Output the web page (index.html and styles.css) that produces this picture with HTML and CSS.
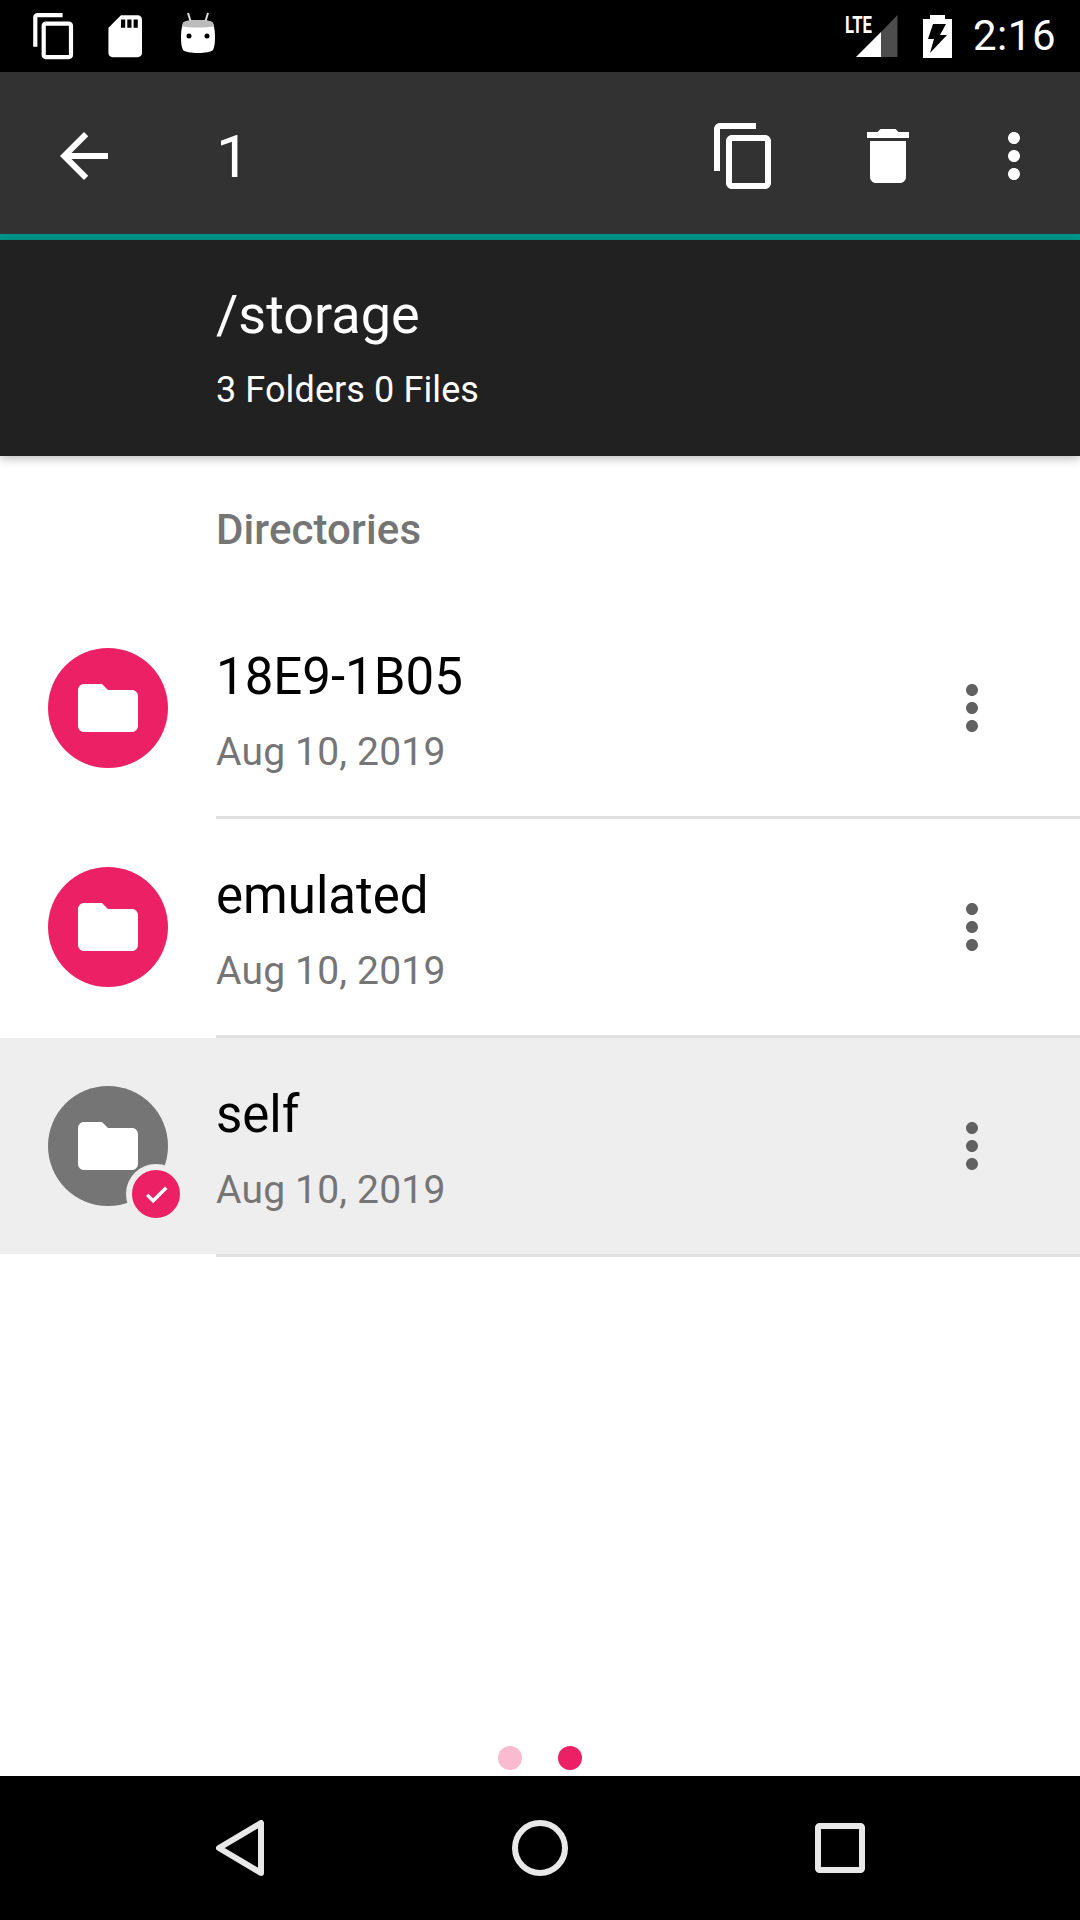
FILE: index.html
```html
<!DOCTYPE html>
<html lang="en">

<head>
    <meta charset="UTF-8">
    <title>Files</title>
    <link rel="stylesheet" href="styles.css">
</head>

<body>
    <div class="app">
        <div class="statusbar">
            <div class="status-left">
                <svg class="status-ic" viewBox="0 0 24 24">
                    <path d="M16 1H4c-1.100 0-2 .9-2 2v14h2V3h12V1zm3 4H8c-1.100 0-2 .9-2 2v14c0 1.100.9 2 2 2h11c1.100 0 2-.9 2-2V7c0-1.100-.9-2-2-2zm0 16H8V7h11v14z" />
                </svg>
                <svg class="status-ic" viewBox="0 0 24 24">
                    <path d="M18 2h-8L4.020 8 4 20c0 1.100.9 2 2 2h12c1.100 0 2-.9 2-2V4c0-1.100-.9-2-2-2zm-6 6h-2V4h2v4zm3 0h-2V4h2v4zm3 0h-2V4h2v4z" />
                </svg>
                <svg class="status-bot" viewBox="0 0 40 48">
                    <path d="M10 3l2.500 8M30 3l-2.500 8" stroke="#ddd" stroke-width="2" fill="none" />
                    <path d="M20 10C28 10 34 11 35 13C36.500 18 37 22 37 27C37 33 36.500 37 35 40C33 42 27 43 20 43C13 43 7 42 5 40C3.500 37 3 33 3 27C3 22 3.500 18 5 13C6 11 12 10 20 10z" fill="#fff" />
                    <path d="M5 13C6 11 12 10 20 10s14 1 15 3c.5 1.500.8 2.500 1 3.500C32 17 27 17.500 20 17.500S8 17 4 16.500c.2-1 .5-2 1-3.500z" fill="#bbb" />
                    <circle cx="11" cy="26" r="2.500" fill="#000" />
                    <circle cx="29" cy="26" r="2.500" fill="#000" />
                </svg>
            </div>
            <div class="status-right">
                <svg class="signal" viewBox="0 0 54 43">
                    <text x="0" y="18" class="lte" textLength="27" lengthAdjust="spacingAndGlyphs">LTE</text>
                    <path d="M11 42L36 17v25z" fill="#fff" />
                    <path d="M36 17L52.500 0v42H36z" fill="#4d4d4d" />
                </svg>
                <svg class="battery" viewBox="0 0 29 43">
                    <path d="M7 0h15v4h7v39H0V4h7z" fill="#fff" />
                    <path d="M10 9h13l-6 11h7L7 38l4-14H5z" fill="#000" />
                </svg>
                <span class="clock">2:16</span>
            </div>
        </div>

        <div class="toolbar">
            <button class="tool back">
                <svg viewBox="0 0 24 24">
                    <path d="M20 11H7.830l5.590-5.590L12 4l-8 8 8 8 1.410-1.410L7.830 13H20v-2z" />
                </svg>
            </button>
            <div class="count">1</div>
            <button class="tool">
                <svg viewBox="0 0 24 24">
                    <path d="M16 1H4c-1.100 0-2 .9-2 2v14h2V3h12V1zm3 4H8c-1.100 0-2 .9-2 2v14c0 1.100.9 2 2 2h11c1.100 0 2-.9 2-2V7c0-1.100-.9-2-2-2zm0 16H8V7h11v14z" />
                </svg>
            </button>
            <button class="tool">
                <svg viewBox="0 0 24 24">
                    <path d="M6 19c0 1.100.9 2 2 2h8c1.100 0 2-.9 2-2V7H6v12zM19 4h-3.500l-1-1h-5l-1 1H5v2h14V4z" />
                </svg>
            </button>
            <button class="tool overflow">
                <svg viewBox="0 0 24 24">
                    <path d="M12 8c1.100 0 2-.9 2-2s-.9-2-2-2-2 .9-2 2 .9 2 2 2zm0 2c-1.100 0-2 .9-2 2s.9 2 2 2 2-.9 2-2-.9-2-2-2zm0 6c-1.100 0-2 .9-2 2s.9 2 2 2 2-.9 2-2-.9-2-2-2z" />
                </svg>
            </button>
        </div>

        <div class="path-header">
            <div class="path">/storage</div>
            <div class="summary">3 Folders 0 Files</div>
        </div>

        <div class="content">
            <div class="section-title">Directories</div>

            <div class="row">
                <div class="avatar">
                    <svg viewBox="0 0 24 24">
                        <path d="M10 4H4c-1.100 0-2 .9-2 2v12c0 1.100.9 2 2 2h16c1.100 0 2-.9 2-2V8c0-1.100-.9-2-2-2h-8l-2-2z" />
                    </svg>
                </div>
                <div class="row-text">
                    <div class="name">18E9-1B05</div>
                    <div class="date">Aug 10, 2019</div>
                </div>
                <svg class="row-menu" viewBox="0 0 24 24">
                    <path d="M12 8c1.100 0 2-.9 2-2s-.9-2-2-2-2 .9-2 2 .9 2 2 2zm0 2c-1.100 0-2 .9-2 2s.9 2 2 2 2-.9 2-2-.9-2-2-2zm0 6c-1.100 0-2 .9-2 2s.9 2 2 2 2-.9 2-2-.9-2-2-2z" />
                </svg>
            </div>
            <div class="divider"></div>

            <div class="row">
                <div class="avatar">
                    <svg viewBox="0 0 24 24">
                        <path d="M10 4H4c-1.100 0-2 .9-2 2v12c0 1.100.9 2 2 2h16c1.100 0 2-.9 2-2V8c0-1.100-.9-2-2-2h-8l-2-2z" />
                    </svg>
                </div>
                <div class="row-text">
                    <div class="name">emulated</div>
                    <div class="date">Aug 10, 2019</div>
                </div>
                <svg class="row-menu" viewBox="0 0 24 24">
                    <path d="M12 8c1.100 0 2-.9 2-2s-.9-2-2-2-2 .9-2 2 .9 2 2 2zm0 2c-1.100 0-2 .9-2 2s.9 2 2 2 2-.9 2-2-.9-2-2-2zm0 6c-1.100 0-2 .9-2 2s.9 2 2 2 2-.9 2-2-.9-2-2-2z" />
                </svg>
            </div>
            <div class="divider"></div>

            <div class="row selected">
                <div class="avatar">
                    <svg viewBox="0 0 24 24">
                        <path d="M10 4H4c-1.100 0-2 .9-2 2v12c0 1.100.9 2 2 2h16c1.100 0 2-.9 2-2V8c0-1.100-.9-2-2-2h-8l-2-2z" />
                    </svg>
                    <div class="check">
                        <svg viewBox="0 0 24 24">
                            <path d="M9 16.170L4.830 12l-1.420 1.410L9 19 21 7l-1.410-1.410z" />
                        </svg>
                    </div>
                </div>
                <div class="row-text">
                    <div class="name">self</div>
                    <div class="date">Aug 10, 2019</div>
                </div>
                <svg class="row-menu" viewBox="0 0 24 24">
                    <path d="M12 8c1.100 0 2-.9 2-2s-.9-2-2-2-2 .9-2 2 .9 2 2 2zm0 2c-1.100 0-2 .9-2 2s.9 2 2 2 2-.9 2-2-.9-2-2-2zm0 6c-1.100 0-2 .9-2 2s.9 2 2 2 2-.9 2-2-.9-2-2-2z" />
                </svg>
            </div>
            <div class="divider"></div>
        </div>

        <div class="pager">
            <span class="dot"></span>
            <span class="dot active"></span>
        </div>

        <div class="navbar">
            <svg class="nav-ic nav-back" viewBox="0 0 48 56">
                <path d="M45 3v50L3 28z" />
            </svg>
            <svg class="nav-ic nav-home" viewBox="0 0 56 56">
                <circle cx="28" cy="28" r="25" />
            </svg>
            <svg class="nav-ic nav-recent" viewBox="0 0 50 50">
                <rect x="3" y="3" width="44" height="44" rx="1.500" />
            </svg>
        </div>
    </div>
</body>

</html>
```

FILE: styles.css
```css
* {
    box-sizing: border-box;
}

body {
    margin: 0;
    font-family: Roboto, "Liberation Sans", sans-serif;
    background: #fff;
}

.app {
    width: 1080px;
    height: 1920px;
    display: flex;
    flex-direction: column;
    overflow: hidden;
}

/* status bar */
.statusbar {
    height: 72px;
    background: #000;
    display: flex;
    justify-content: space-between;
    flex-shrink: 0;
}

.status-left {
    display: flex;
    align-items: flex-start;
    padding: 11px 0 0 29px;
    gap: 21px;
}

.status-ic {
    width: 50.400px;
    height: 50.400px;
    fill: #fff;
}

.status-bot {
    width: 40px;
    height: 48px;
    margin: -1px 0 0 6px;
}

.status-right {
    display: flex;
    align-items: flex-start;
    padding: 15px 27px 0 0;
}

.signal {
    width: 54px;
    height: 43px;
    overflow: visible;
}

.lte {
    font-family: Roboto, sans-serif;
    font-size: 24px;
    font-weight: 700;
    fill: #fff;
}

.battery {
    width: 29px;
    height: 43px;
    margin-left: 24px;
}

.clock {
    width: 80px;
    color: #fff;
    font-size: 42px;
    line-height: 42px;
    margin-left: 21px;
    letter-spacing: 0.5px;
    white-space: nowrap;
}

/* toolbar */
.toolbar {
    height: 168px;
    background: #323232;
    border-bottom: 6px solid #009688;
    display: flex;
    align-items: flex-start;
    padding-right: 12px;
    flex-shrink: 0;
}

.tool {
    width: 144px;
    height: 162px;
    padding: 0;
    background: none;
    border: none;
    display: flex;
    align-items: center;
    justify-content: center;
}

.tool svg {
    width: 72px;
    height: 72px;
    fill: #fff;
    margin-top: 6px;
}

.back {
    width: 72px;
    margin-left: 48px;
}

.overflow {
    width: 108px;
}

.count {
    flex: 1;
    margin-left: 96px;
    color: #fff;
    font-size: 60px;
    line-height: 162px;
    margin-top: 4px;
}

/* path header */
.path-header {
    height: 216px;
    background: #212121;
    padding: 45px 0 0 216px;
    color: #fff;
    box-shadow: 0 3px 9px rgba(0, 0, 0, 0.25);
    position: relative;
    flex-shrink: 0;
}

.path {
    font-size: 54px;
    line-height: 60px;
}

.summary {
    font-size: 36px;
    line-height: 44px;
    margin-top: 23px;
    letter-spacing: 0.1px;
}

/* list */
.content {
    flex: 1;
}

.section-title {
    height: 144px;
    padding: 51px 0 0 216px;
    color: #757575;
    font-size: 42px;
    font-weight: 500;
    line-height: 46px;
    letter-spacing: 0.1px;
}

.row {
    height: 216px;
    display: flex;
    align-items: flex-start;
}

.row.selected {
    background: #eee;
}

.avatar {
    width: 120px;
    height: 120px;
    margin: 48px 0 0 48px;
    border-radius: 50%;
    background: #ec2064;
    display: flex;
    align-items: center;
    justify-content: center;
    position: relative;
    flex-shrink: 0;
}

.selected .avatar {
    background: #757575;
}

.avatar > svg {
    width: 72px;
    height: 72px;
    fill: #fff;
}

.check {
    position: absolute;
    left: 78px;
    top: 78px;
    width: 60px;
    height: 60px;
    border-radius: 50%;
    background: #ec2064;
    border: 6px solid #eee;
    display: flex;
    align-items: center;
    justify-content: center;
}

.check svg {
    width: 27px;
    height: 27px;
    fill: #fff;
    stroke: #fff;
    stroke-width: 1;
}

.row-text {
    flex: 1;
    margin-left: 48px;
    padding-top: 42px;
}

.name {
    font-size: 51px;
    line-height: 70px;
    color: #000;
}

.date {
    font-size: 39px;
    line-height: 50px;
    margin-top: 15px;
    color: #757575;
    letter-spacing: 0.2px;
}

.row-menu {
    width: 72px;
    height: 72px;
    margin: 72px 72px 0 0;
    fill: #616161;
    flex-shrink: 0;
}

.divider {
    height: 3px;
    margin-left: 216px;
    background: #e0e0e0;
}

/* pager */
.pager {
    height: 30px;
    display: flex;
    justify-content: center;
    gap: 36px;
    flex-shrink: 0;
}

.dot {
    width: 24px;
    height: 24px;
    border-radius: 50%;
    background: #f8bbd0;
}

.dot.active {
    background: #ec2064;
}

/* nav bar */
.navbar {
    height: 144px;
    background: #000;
    display: flex;
    align-items: flex-start;
    padding: 44px 0 0 216px;
    flex-shrink: 0;
}

.nav-ic {
    fill: none;
    stroke: #e8e8e8;
    stroke-width: 6;
    stroke-linejoin: round;
}

.nav-back {
    width: 48px;
    height: 56px;
}

.nav-home {
    width: 56px;
    height: 56px;
    margin-left: 248px;
}

.nav-recent {
    width: 50px;
    height: 50px;
    margin: 3px 0 0 247px;
}
```
